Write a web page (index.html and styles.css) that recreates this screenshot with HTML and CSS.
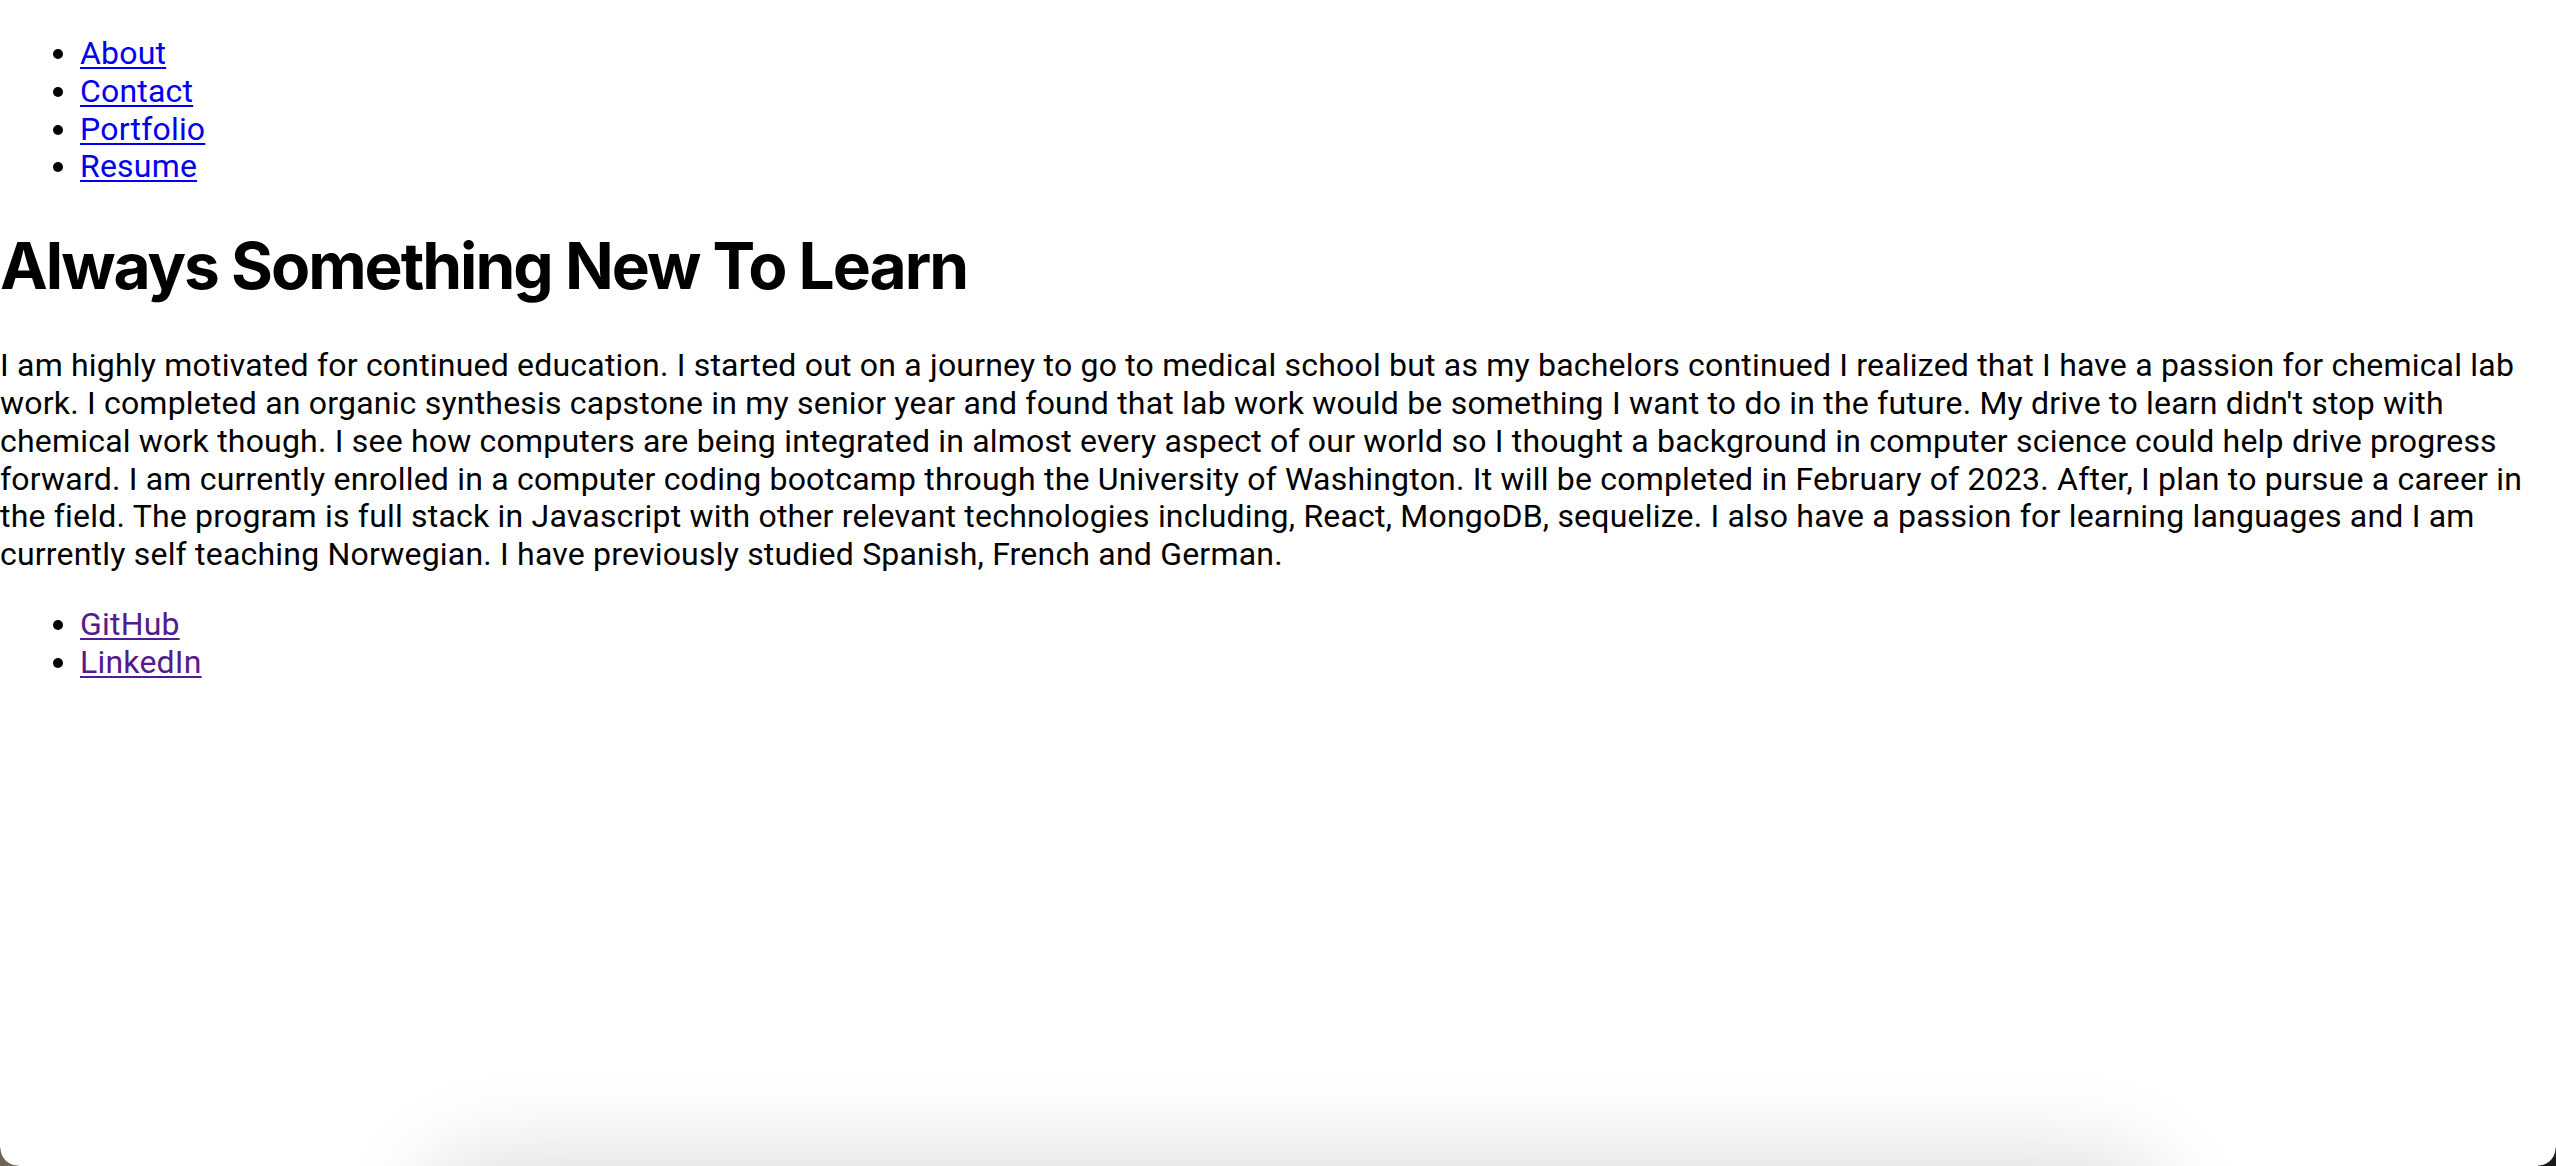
FILE: index.html
```html
<!DOCTYPE html>
<html lang="en">
<head>
<meta charset="utf-8">
<title>About</title>
<link rel="stylesheet" href="styles.css">
</head>
<body>
<header class="site-header">
  <ul class="nav-list">
    <li><a class="link" href="#about">About</a></li>
    <li><a class="link" href="#contact">Contact</a></li>
    <li><a class="link" href="#portfolio">Portfolio</a></li>
    <li><a class="link" href="#resume">Resume</a></li>
  </ul>
</header>
<main class="content">
  <h1 class="title">Always Something New To Learn</h1>
  <p class="bio">I am highly motivated for continued education. I started out on a journey to go to medical school but as my bachelors continued I realized that I have a passion for chemical lab work. I completed an organic synthesis capstone in my senior year and found that lab work would be something I want to do in the future. My drive to learn didn't stop with chemical work though. I see how computers are being integrated in almost every aspect of our world so I thought a background in computer science could help drive progress forward. I am currently enrolled in a computer coding bootcamp through the University of Washington. It will be completed in February of 2023. After, I plan to pursue a career in the field. The program is full stack in Javascript with other relevant technologies including, React, MongoDB, sequelize. I also have a passion for learning languages and I am currently self teaching Norwegian. I have previously studied Spanish, French and German.</p>
</main>
<footer class="site-footer">
  <ul class="social-list">
    <li><a class="link visited" href="#github">GitHub</a></li>
    <li><a class="link visited" href="#linkedin">LinkedIn</a></li>
  </ul>
</footer>
<div class="dock-shadow"></div>
<div class="corner corner-left"></div>
<div class="corner corner-right"></div>
</body>
</html>
```

FILE: styles.css
```css
html, body {
  background: #ffffff;
}

body {
  margin: 0;
  padding-top: 3px;
  font-family: "Roboto", "Noto Sans", "Liberation Sans", sans-serif;
  font-size: 32px;
  line-height: 37.8px;
  letter-spacing: 0.2px;
  color: #000000;
  overflow: hidden;
}

.nav-list,
.social-list {
  margin: 32px 0;
  padding-left: 80px;
  list-style: disc;
}

.link {
  color: #0000ee;
  text-decoration: underline;
  text-decoration-thickness: 2px;
  text-underline-offset: 3px;
}

.link.visited {
  color: #551a8b;
}

.title {
  font-family: "Inter", "Roboto", sans-serif;
  font-size: 64px;
  line-height: 76px;
  font-weight: 700;
  margin: 42px 0 43px;
  letter-spacing: -2px;
}

.bio {
  margin: 32px 0;
}

.dock-shadow {
  position: fixed;
  left: 430px;
  right: 400px;
  bottom: -120px;
  height: 120px;
  border-radius: 80px;
  box-shadow: 0 0 90px 10px rgba(0, 0, 0, 0.14);
  pointer-events: none;
}

.corner {
  position: fixed;
  bottom: 0;
  width: 18px;
  height: 18px;
  pointer-events: none;
}

.corner-left {
  left: 0;
  background: radial-gradient(circle at 18px 0, transparent 17px, #6e6452 18px);
}

.corner-right {
  right: 0;
  background: radial-gradient(circle at 0 0, transparent 17px, #1a1a1a 18px);
}
```
